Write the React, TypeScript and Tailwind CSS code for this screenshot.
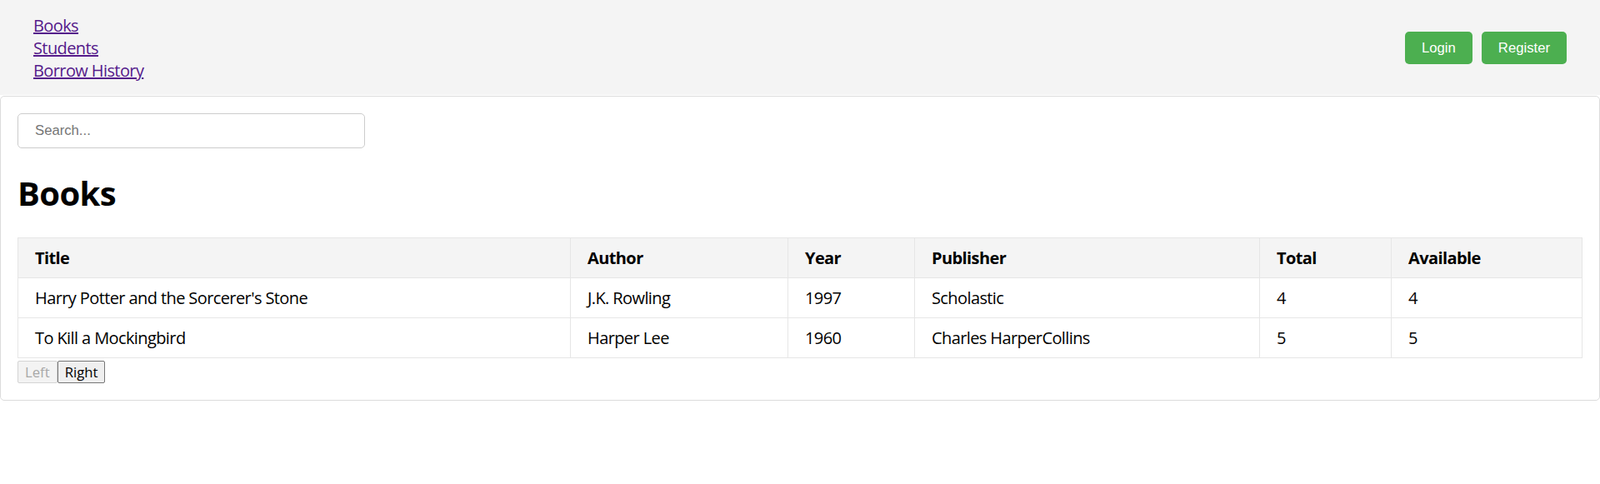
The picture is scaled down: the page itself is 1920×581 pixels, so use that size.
const books = [
  { title: "Harry Potter and the Sorcerer's Stone", author: 'J.K. Rowling', year: 1997, publisher: 'Scholastic', total: 4, available: 4 },
  { title: 'To Kill a Mockingbird', author: 'Harper Lee', year: 1960, publisher: 'Charles HarperCollins', total: 5, available: 5 },
];

const cols = ['Title', 'Author', 'Year', 'Publisher', 'Total', 'Available'];

export default function App() {
  return (
    <div className="min-h-[581px] bg-white font-['Open_Sans',sans-serif] text-[20px] tracking-[-0.03em] text-black">
      {/* Top nav */}
      <nav className="flex items-center justify-between bg-[#f4f4f4] px-[40px] pt-[17px] pb-[16px]">
        <div className="flex flex-col leading-[27px]">
          <a href="#" className="text-[#551a8b] underline">Books</a>
          <a href="#" className="text-[#551a8b] underline">Students</a>
          <a href="#" className="text-[#551a8b] underline">Borrow History</a>
        </div>
        <div className="flex gap-[11px] font-['Liberation_Sans',Arial,sans-serif] text-[16.7px] tracking-normal">
          <button className="rounded-[5px] bg-[#4caf50] px-[20px] py-[10px] leading-[19px] text-white">Login</button>
          <button className="rounded-[5px] bg-[#4caf50] px-[20px] py-[10px] leading-[19px] text-white">Register</button>
        </div>
      </nav>

      {/* Content card */}
      <div className="mt-px rounded-[5px] border border-[#dcdcdc] bg-white p-[20px]">
        <input
          type="text"
          placeholder="Search..."
          className="h-[42px] w-[417px] rounded-[5px] border border-[#cccccc] px-[20px] font-['Liberation_Sans',Arial,sans-serif] text-[16.7px] tracking-normal outline-none placeholder:text-[#757575]"
        />

        <h1 className="my-[27px] text-[40px] font-bold leading-[53px]">Books</h1>

        <table className="w-full table-fixed border-collapse">
          <colgroup>
            <col className="w-[663px]" />
            <col className="w-[261px]" />
            <col className="w-[152px]" />
            <col className="w-[414px]" />
            <col className="w-[158px]" />
            <col />
          </colgroup>
          <thead>
            <tr className="bg-[#f4f4f4]">
              {cols.map(c => (
                <th key={c} className="h-[48px] border border-[#e6e6e6] px-[20px] text-left font-bold leading-[26px]">{c}</th>
              ))}
            </tr>
          </thead>
          <tbody>
            {books.map(b => (
              <tr key={b.title}>
                <td className="h-[48px] border border-[#e6e6e6] px-[20px] leading-[26px]">{b.title}</td>
                <td className="border border-[#e6e6e6] px-[20px] leading-[26px]">{b.author}</td>
                <td className="border border-[#e6e6e6] px-[20px] leading-[26px]">{b.year}</td>
                <td className="border border-[#e6e6e6] px-[20px] leading-[26px]">{b.publisher}</td>
                <td className="border border-[#e6e6e6] px-[20px] leading-[26px]">{b.total}</td>
                <td className="border border-[#e6e6e6] px-[20px] leading-[26px]">{b.available}</td>
              </tr>
            ))}
          </tbody>
        </table>

        {/* Pagination */}
        <div className="mt-[3px] flex text-[16.7px] tracking-normal">
          <button disabled className="h-[27px] rounded-[2px] border border-[#d4d4d4] bg-[#f3f3f3] px-[8px] leading-[23px] text-[#a8a8a8]">Left</button>
          <button className="h-[27px] rounded-[2px] border border-[#767676] bg-[#efefef] px-[8px] leading-[23px] text-black">Right</button>
        </div>
      </div>
    </div>
  );
}
